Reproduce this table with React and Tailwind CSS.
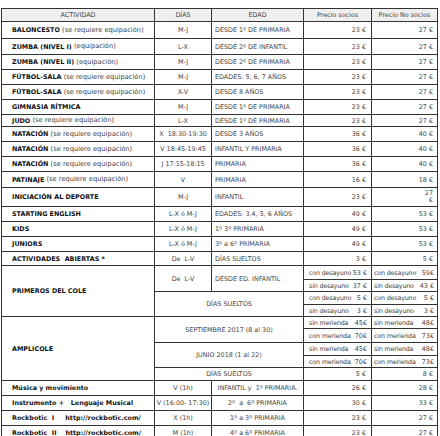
import React from "react";

const F = { fontFamily: '"DejaVu Sans", Verdana, sans-serif' };

function B({ children }) {
  return <span className="font-bold text-[6.4px] text-[#111]">{children}</span>;
}

function N({ children }) {
  return <span className="font-normal text-[6.7px] text-[#444]">{children}</span>;
}

function Act({ bold, rest, span }) {
  return (
    <div className={`bg-white flex items-center pl-[10px] whitespace-pre leading-none ${span || ""}`}>
      <B>{bold}</B>
      {rest ? <N>{rest}</N> : null}
    </div>
  );
}

function Center({ children, span }) {
  return (
    <div className={`bg-white flex items-center justify-center whitespace-pre leading-none text-[6.4px] text-[#444] ${span || ""}`}>
      {children}
    </div>
  );
}

function Left({ children }) {
  return (
    <div className="bg-white flex items-center pl-[3px] whitespace-pre leading-none text-[6.4px] text-[#444]">
      {children}
    </div>
  );
}

function Price({ children }) {
  return (
    <div className="bg-white flex items-center justify-end pr-[5px] whitespace-pre leading-none text-[6.4px] text-[#444]">
      {children}
    </div>
  );
}

function PriceNo({ children }) {
  return (
    <div className="bg-white flex items-center justify-end pr-[4px] whitespace-pre leading-none text-[6.4px] text-[#444]">
      {children}
    </div>
  );
}

function SubS({ label, amount }) {
  return (
    <div className="bg-white flex items-center justify-between pl-[5px] pr-[4px] whitespace-pre leading-none text-[6.4px] text-[#444]">
      <span className="tracking-[-0.2px]">{label}</span>
      <span>{amount}</span>
    </div>
  );
}

function SubN({ label, amount }) {
  return (
    <div className="bg-white flex items-center justify-between pl-[2px] pr-[3px] whitespace-pre leading-none text-[6.4px] text-[#444]">
      <span className="tracking-[-0.2px]">{label}</span>
      <span>{amount}</span>
    </div>
  );
}

function Head({ children }) {
  return (
    <div className="bg-[#efefef] flex items-center justify-center leading-none text-[6.4px] text-[#444]">
      {children}
    </div>
  );
}

const simple = [
  ["BALONCESTO", " (se requiere equipación)", "M-J", "DESDE 1º DE PRIMARIA", "23 €", "27 €"],
  ["ZUMBA (NIVEL I)", " (equipación)", "L-X", "DESDE 2º DE INFANTIL", "23 €", "27 €"],
  ["ZUMBA (NIVEL II)", " (equipación)", "M-J", "DESDE 2º DE PRIMARIA", "23 €", "27 €"],
  ["FÚTBOL-SALA", " (se requiere equipación)", "M-J", "EDADES: 5, 6, 7 AÑOS", "23 €", "27 €"],
  ["FÚTBOL-SALA", " (se requiere equipación)", "X-V", "DESDE 8 AÑOS", "23 €", "27 €"],
  ["GIMNASIA RÍTMICA", "", "M-J", "DESDE 1º DE PRIMARIA", "23 €", "27 €"],
  ["JUDO", " (se requiere equipación)", "L-X", "DESDE 1º DE PRIMARIA", "23 €", "27 €"],
  ["NATACIÓN", " (se requiere equipación)", "X  18:30-19:30", "DESDE 3 AÑOS", "36 €", "40 €"],
  ["NATACIÓN", " (se requiere equipación)", "V 18:45-19:45", "INFANTIL Y PRIMARIA", "36 €", "40 €"],
  ["NATACIÓN", " (se requiere equipación)", "J 17:15-18:15", "PRIMARIA", "36 €", "40 €"],
  ["PATINAJE", " (se requiere equipación)", "V", "PRIMARIA", "16 €", "18 €"],
];

const simple2 = [
  ["STARTING ENGLISH", "", "L-X ó M-J", "EDADES: 3,4, 5, 6 AÑOS", "49 €", "53 €"],
  ["KIDS", "", "L-X ó M-J", "1º 3º PRIMARIA", "49 €", "53 €"],
  ["JUNIORS", "", "L-X ó M-J", "3º a 6º PRIMARIA", "49 €", "53 €"],
  ["ACTIVIDADES  ABIERTAS *", "", "De  L-V", "DÍAS SUELTOS", "3 €", "5 €"],
];

const last = [
  ["Música y movimiento", "V (1h)", "INFANTIL y  1º PRIMARIA.", "26 €", "28 €"],
  ["Instrumento +   Lenguaje Musical", "V (16:00- 17:30)", "2º  a  6º PRIMARIA", "30 €", "33 €"],
  ["Rockbotic  I     http://rockbotic.com/", "X (1h)", "1º a 3º PRIMARIA", "23 €", "27 €"],
  ["Rockbotic  II    http://rockbotic.com/", "M (1h)", "4º a 6º PRIMARIA", "23 €", "27 €"],
];

function Row({ r }) {
  return (
    <>
      <Act bold={r[0]} rest={r[1]} />
      <Center>{r[2]}</Center>
      <Left>{r[3]}</Left>
      <Price>{r[4]}</Price>
      <PriceNo>{r[5]}</PriceNo>
    </>
  );
}

export default function App() {
  return (
    <div className="w-[440px] h-[436px] bg-white" style={F}>
      <div className="ml-px inline-grid grid-cols-[152px_56px_91px_67px_65px] grid-rows-[12px_16px_15px_14px_14px_14px_14px_11px_14px_14px_14px_15px_18px_14px_14px_14px_13px_13px_11px_12px_11px_11px_13px_12px_11px_12px_14px_14px_14px_14px] gap-px bg-[#333] border border-[#333]">
        <Head>ACTIVIDAD</Head>
        <Head>DÍAS</Head>
        <Head>EDAD</Head>
        <Head>Precio socios</Head>
        <Head>Precio No socios</Head>

        {simple.map((r, i) => (
          <Row key={"s" + i} r={r} />
        ))}

        <Act bold="INICIACIÓN AL DEPORTE" />
        <Center>M-J</Center>
        <Left>INFANTIL</Left>
        <Price>23 €</Price>
        <div className="bg-white flex flex-col items-end justify-center pr-[4px] leading-[7px] text-[6.4px] text-[#444]">
          <span>27</span>
          <span>€</span>
        </div>

        {simple2.map((r, i) => (
          <Row key={"t" + i} r={r} />
        ))}

        <Act bold="PRIMEROS DEL COLE" span="row-span-4" />
        <Center span="row-span-2">De  L-V</Center>
        <div className="row-span-2 bg-white flex items-center pl-[3px] leading-none text-[6.4px] text-[#444]">
          DESDE ED. INFANTIL
        </div>
        <SubS label="con desayuno" amount="53 €" />
        <SubN label="con desayuno" amount="59€" />
        <SubS label="sin desayuno" amount="37 €" />
        <SubN label="sin desayuno" amount="43 €" />
        <Center span="col-span-2 row-span-2">DÍAS SUELTOS</Center>
        <SubS label="con desayuno" amount="5 €" />
        <SubN label="con desayuno" amount="5 €" />
        <SubS label="sin desayuno" amount="3 €" />
        <SubN label="sin desayuno" amount="3 €" />

        <Act bold="AMPLICOLE" span="row-span-5" />
        <Center span="col-span-2 row-span-2">SEPTIEMBRE 2017 (8 al 30)</Center>
        <SubS label="sin merienda" amount="45€" />
        <SubN label="sin merienda" amount="48€" />
        <SubS label="con merienda" amount="70€" />
        <SubN label="con merienda" amount="73€" />
        <Center span="col-span-2 row-span-2">JUNIO 2018 (1 al 22)</Center>
        <SubS label="sin merienda" amount="45€" />
        <SubN label="sin merienda" amount="48€" />
        <SubS label="con merienda" amount="70€" />
        <SubN label="con merienda" amount="73€" />
        <Center span="col-span-2">DÍAS SUELTOS</Center>
        <Price>5 €</Price>
        <PriceNo>8 €</PriceNo>

        {last.map((r, i) => (
          <React.Fragment key={"l" + i}>
            <Act bold={r[0]} />
            <Center>{r[1]}</Center>
            <Center>{r[2]}</Center>
            <Price>{r[3]}</Price>
            <PriceNo>{r[4]}</PriceNo>
          </React.Fragment>
        ))}
      </div>
    </div>
  );
}
